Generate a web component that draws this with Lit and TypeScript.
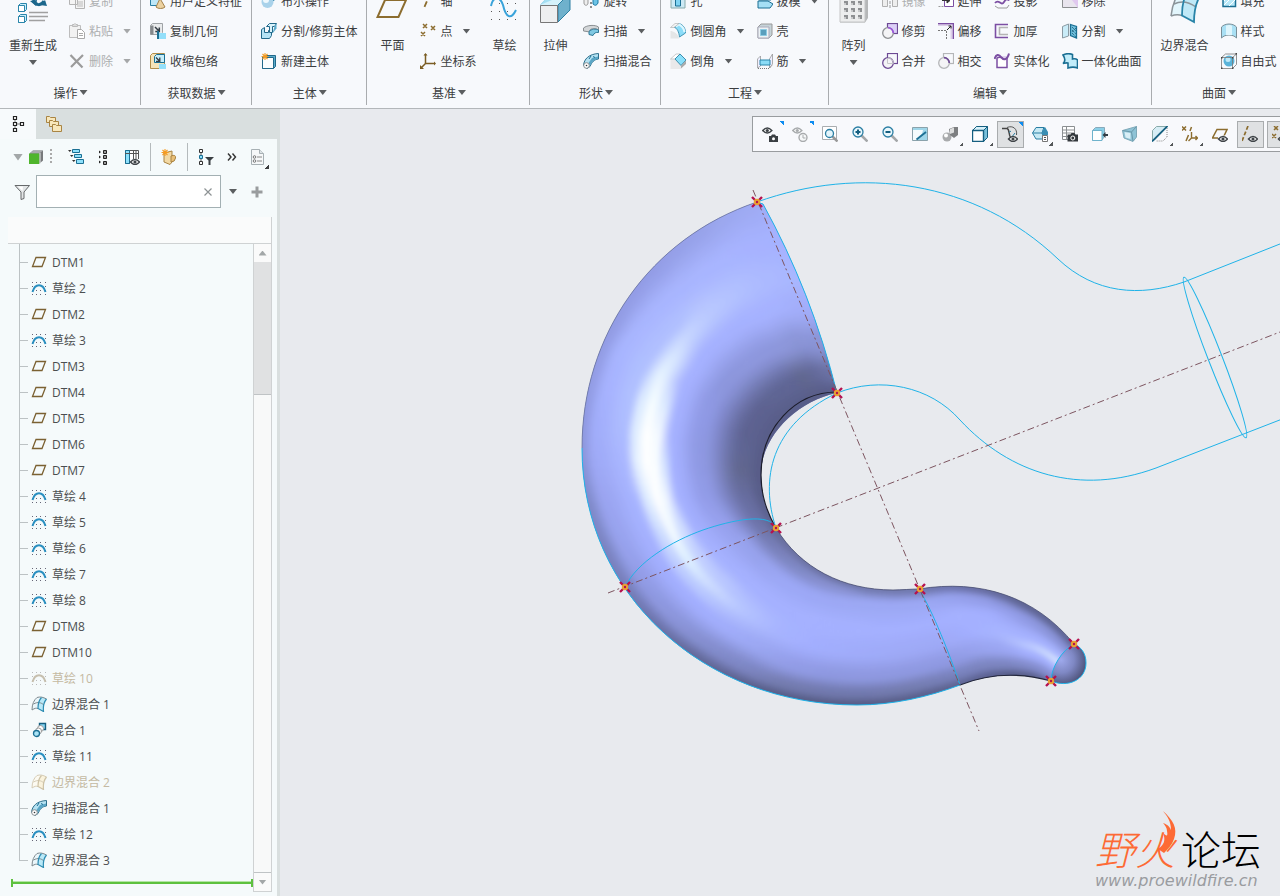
import {LitElement, html, svg, css, nothing, SVGTemplateResult} from 'lit';
import {customElement, property} from 'lit/decorators.js';
import {classMap} from 'lit/directives/class-map.js';

type Point = [number, number];

interface Command {
  icon: string;
  label: string;
  menu?: boolean;
  off?: boolean;
}

interface Big {
  big: Command;
}

interface Group {
  name: string;
  blocks: (Big | Command[])[];
}

/* ---------- icons ---------- */

const eye = (x: number, y: number, c = '#3f4448') => svg`
  <path d="M${x} ${y + 3}q4.500 -5 9 0q-4.500 5 -9 0z" fill="#fff" stroke=${c} stroke-width="1.500"/>
  <circle cx=${x + 4.5} cy=${y + 3} r="1.600" fill=${c}/>`;

const dots = (xs: number[], ys: number[], c: string) =>
  xs.map((x) => ys.map((y) => svg`<rect x=${x} y=${y} width="1" height="1" fill=${c}/>`));

const quilt = (edge: string, edge2: string, fill: string, fill2: string) => svg`
  <path d="M1 14C1 8 3 4 6 1.500C9 .5 12 1 15.500 3C13 6 12 11 12.500 15.500C9 12 5 12 1 14z" fill=${fill}/>
  <path d="M10.500 1.500C13 1.500 14 2 15.500 3C13 6 12 11 12.500 15.500L7 12.500C7 8 8 4 10.500 1.500z" fill=${fill2}/>
  <path d="M1 14C1 8 3 4 6 1.500C9 .5 12 1 15.500 3M1 14C4 12 5 12 7 12.500M2.500 8C7 5.500 10 6.500 13 9" fill="none" stroke=${edge}/>
  <path d="M15.500 3C13 6 12 11 12.500 15.500L7 12.500C7 8 8 4 10.500 1.500" fill="none" stroke=${edge2} stroke-width="1.200"/>`;

const sketch = (line: string, grid: string) => svg`
  ${dots([1, 5, 9, 14], [2, 14], grid)}${dots([1, 14], [6, 10], grid)}${dots([5, 9], [10], grid)}
  <path d="M1.500 12C4 3 12 3 14.500 12" fill="none" stroke=${line} stroke-width="2"/>`;

const sweep = svg`
  <path d="M.5 12.500C1 6 6 1 15.500 .5V6C11 6.500 9 9 7 13.500L4 15.500z" fill="#b5e2f2" stroke="#2c6f8c"/>
  <path d="M9 5L15 3.500V6C11 6.500 9 9 7 13L5.500 10z" fill="#5aa6c6"/>
  <path d="M6 6l2-3M10 3.500l2 1" stroke="#1b6f93"/>
  <circle cx="3.500" cy="12.500" r="2.800" fill="#fff" stroke="#8a8f92"/><circle cx="3.500" cy="12.500" r=".8" fill="#333"/>`;

const venn = (ring: string, box: string, extra: unknown = nothing, fill = 'none') => svg`
  <rect x="5.500" y=".5" width="10" height="10" fill=${fill} stroke=${box} stroke-width="1.200"/>
  <circle cx="6" cy="10" r="5.300" fill="#f4f4f6" stroke=${ring} stroke-width="1.300"/>${extra}`;

const icons: Record<string, SVGTemplateResult> = {
  regen: svg`
    <path d="M16 8c3 6 8 6 11 1" fill="none" stroke="#1c678c" stroke-width="3"/>
    <path d="M13 9l6 5 1-6zM23 13l7 1-2-6z" fill="#1c678c"/>
    <g fill="#c9eefb" stroke="#2a86ab"><path d="M1.500 13.500l2-2h6v6l-2 2h-6z"/><path d="M1.500 24.500l2-2h6v6l-2 2h-6z"/></g>
    <g fill="#fff" stroke="#2a86ab"><path d="M1.500 13.500h6v6h-6z"/><path d="M1.500 24.500h6v6h-6z"/></g>
    <path d="M12 20.500h19M12 24.500h19M12 28.500h16" stroke="#a0a0a0" stroke-width="1.500"/>`,
  copy: svg`
    <path d="M.5 1.500h8v10h-8zM6.500 5.500h9v10h-9z" fill="#f4f4f4" stroke="#b4b4b4"/>
    <path d="M8 9h6M8 11h6M8 13h6" stroke="#bbb"/>`,
  paste: svg`
    <path d="M.5 2.500h11v12h-11z" fill="#f2f2f2" stroke="#bdbdbd"/>
    <path d="M3.500 3.500v-2h1.500l1-1 1 1h1.500v2z" fill="#ddd" stroke="#bbb"/>
    <path d="M8.500 6.500h4l3 3v6h-7z" fill="#fff" stroke="#a9a9a9"/><path d="M10 10.500h4M10 12.500h4" stroke="#aaa"/>`,
  remove: svg`<path d="M1.500 2L13.500 14.500M14 2L2 14" stroke="#9b9b9b" stroke-width="2.200"/>`,
  udf: svg`
    <path d="M.5 1.500h9v11h-9z" fill="#bde7f7" stroke="#2a7ea3"/>
    <path d="M10 5.500l5 8.500c-2 2-7 2-9 0z" fill="#ecd2a1" stroke="#a3814a"/>`,
  copyGeom: svg`
    <path d="M.5 2.500l2-2h10v9l-2 2h-10z" fill="#e9ebec" stroke="#9fa3a6"/>
    <path d="M.5 2.500h3v9h-3z" fill="#85898c"/>
    <path d="M5 4l4 4M9.300 4.500v4h-4" fill="none" stroke="#333c44" stroke-width="1.500"/>
    <path d="M8 10h8v6H8z" fill="#93dffa"/><path d="M8 8v8" stroke="#1b6f93" stroke-width="2"/>`,
  shrink: svg`
    <path d="M.5 2.500l2-2h12v13l-2 2H.5z" fill="#f5e3b8" stroke="#b08d4a"/>
    <path d="M4.500 3.500l2-2h8v8h-10z" fill="#c6eefb" stroke="#1b6f93"/>
    <path d="M6 4.500l3.500 3.500M9.800 4.500v3.800H6" fill="none" stroke="#333c44" stroke-width="1.300"/>
    <path d="M9 11h7v5H9z" fill="#93dffa"/>`,
  bool: svg`
    <path d="M5 1.500l2-2h8v6l-2 2H5z" fill="#bde7f7" stroke="#2a7ea3"/>
    <circle cx="6.500" cy="9" r="6" fill="#a9d2ea"/><circle cx="5" cy="7" r="3" fill="#eef8fd"/>`,
  split: svg`
    <path d="M.5 6.500l3-2v5h4v-2h3v5l-2 3h-8z" fill="#b5e4f6" stroke="#22698a"/>
    <path d="M5.500 3.500l3-3h7l-2 3h-2v6h-3v-6z" fill="#d9f3fc" stroke="#22698a"/><path d="M13.500 3.500l2-3v5l-4 5z" fill="#5baccc"/>`,
  newBody: svg`
    <path d="M1.500 4.500l2-2h11v11l-2 2h-11z" fill="#5baccc" stroke="#22698a"/>
    <path d="M1.500 4.500h11v11h-11z" fill="#fbfdfe" stroke="#22698a"/>
    <path d="M4 0v7M.5 3.500h7M1.500 1l5 5M6.500 1l-5 5" stroke="#f49b22" stroke-width="1.100"/>`,
  plane: svg`<path d="M9 8h21L22.500 25H1.500z" fill="none" stroke="#8c6d2f" stroke-width="2"/>`,
  axis: svg`<path d="M10 1L4 15" stroke="#8c6d2f" stroke-width="1.800" stroke-dasharray="6 2"/>`,
  points: svg`<path d="M3 1l4 4M7 1l-4 4M11 3l4 4M15 3l-4 4M1 9l4 4M5 9l-4 4" stroke="#8c6d2f" stroke-width="1.500"/>`,
  csys: svg`
    <path d="M5.500 1v9.500h9M5.500 10.500L1 15" fill="none" stroke="#7a5c22" stroke-width="1.500"/>
    <path d="M3.500 2.500h4l-2-2.500zM14 8.500v4l2-2zM0 12v4h4z" fill="#7a5c22"/>`,
  sketchBig: svg`
    ${dots([3, 11, 19, 27], [11, 19, 27], '#555')}
    <path d="M3 14C5 4 12 4 15 13C18 26 23 28 28 18" fill="none" stroke="#39a3da" stroke-width="2"/>`,
  extrude: svg`
    <path d="M1 13L13 0h18v17L19 30z" fill="#7fbdd6"/>
    <path d="M1 13L13 0h18L19 13z" fill="#a4dff2"/><path d="M13 8h15l-9 5H1z" fill="#d5f2fb"/>
    <path d="M19 13L31 1v17L19 30z" fill="#6fb1cc" stroke="#2c7fa2"/>
    <path d="M1.500 13.500h17v17h-17z" fill="#eeeff0" stroke="#777"/>`,
  revolve: svg`
    <path d="M1 6c0-3 4-3 4 0v4c0 3-4 3-4 0z" fill="#eee" stroke="#999"/>
    <path d="M10 5h5v5q-2 4-5 1z" fill="#6cc3e6" stroke="#1f7ba4"/><path d="M8 1v15" stroke="#222" stroke-dasharray="2 2"/>`,
  sweepFlat: svg`
    <path d="M.5 5C4 2 12 1.500 15.500 4V7C12 5 9 5 7 7v2L.5 8z" fill="#d3d6d8" stroke="#8a8f92"/>
    <path d="M6 8.500C8 6 13 5.500 15.500 7v2.500C13 9 11 10 10 12.500l-4-1z" fill="#7fc8e2" stroke="#2e7896"/>`,
  sweep,
  hole: svg`
    <path d="M1 3h9l5 3v9H1z" fill="#cdeaf5" stroke="#8aa"/><path d="M5.500 3v10h5V3" fill="#7fd4f3" stroke="#1b6f93"/>`,
  round: svg`
    <path d="M.5 8C3 8 8 10 9 15.500H.5z" fill="#e4e6e7"/>
    <path d="M4 4L9 .5C14 2 15.500 6 15.500 10L9.500 14C9 9 7 5 4 4z" fill="#8bdcf8" stroke="#4295b5"/>
    <path d="M6 3.500L9 1.500C12 3 14 6 14.500 9" fill="none" stroke="#def7ff" stroke-width="2"/>
    <path d="M.5 4.500L5 .5h4L4 4.500z" fill="#f4f5f5" stroke="#aaa" stroke-width=".6"/>`,
  chamfer: svg`
    <path d="M.5 6.500H5l6 6V16H.5z" fill="#e9e9ea"/><path d="M.5 6L6 1h4L5 6z" fill="#fff" stroke="#aaa" stroke-width=".6"/>
    <path d="M5 6l5-5 6 6-5 5.500z" fill="#8ae0fb" stroke="#3c8eae"/><path d="M11 12.500l5-5V11l-5 4.500z" fill="#aaa"/>`,
  draft: svg`
    <path d="M2 0h8l4 7H2z" fill="#7fd4f3" stroke="#1b6f93"/><path d="M1 8h10l5 3-3 4H1z" fill="#a5dff5" stroke="#1b6f93"/>`,
  shell: svg`
    <path d="M1 4l3-3h11v11l-3 3H1z" fill="#c6d3d8" stroke="#999"/><path d="M1 4h11v11H1z" fill="#edf2f4" stroke="#aab"/>
    <path d="M3.500 6.500h6v6h-6z" fill="#5a9fbd" stroke="#8ccbe3"/>`,
  rib: svg`
    <path d="M.5 6l3-3v10l-3 2zM12.500 6l3-5v10l-3 4z" fill="#eef" stroke="#999" stroke-width=".8"/>
    <path d="M3 7h10v5H3z" fill="#8adcf6" stroke="#2a86ab"/><path d="M1 15.500h11l3-3" fill="none" stroke="#777" stroke-dasharray="1 1"/>`,
  pattern: svg`
    <path d="M2 8l3-8h25v26l-3 4.500H2z" fill="#b5b7b8"/><path d="M2 4h25v26H2z" fill="#eceded" stroke="#c4c5c6"/>
    ${[6, 13, 20].map((x) => [9, 16, 23].map((y) => svg`<path d="M${x} ${y}h4v4h-4z" fill="#8e9092"/><path d="M${x} ${y + 2}h2v2h-2z" fill="#c9cacb"/>`))}`,
  mirror: svg`<path d="M.5 1.500h5v12h-5zM10.500 1.500h5v12h-5z" fill="#eee" stroke="#b0b0b0"/><path d="M8 0v16" stroke="#999" stroke-dasharray="3 1"/>`,
  extend: svg`<path d="M.5 2h6M.5 13.500h6" stroke="#999" stroke-dasharray="2 1"/><path d="M6.500 1.500h9v12h-9z" fill="#fff" stroke="#7c4fa3"/><path d="M4 7.500h6M9 5l3 2.500L9 10z" stroke="#333" fill="#333"/>`,
  project: svg`<path d="M1 10C5 5 7 14 10 9S14 8 15 7" fill="none" stroke="#7c4fa3" stroke-width="1.800"/><path d="M1 13l3 2h9l2-3" fill="none" stroke="#999"/>`,
  erase: svg`<path d="M.5 1h15v13.500H.5z" fill="#e9e5ee" stroke="#8d8f91"/><path d="M10 7h6v8" fill="#e0c8ef"/>`,
  trim: venn('#8e9093', '#6d4a94', svg`<path d="M6 4.700A5.300 5.300 0 0 1 11.300 10" fill="none" stroke="#9a4fe0" stroke-width="1.600"/>`, '#dcd0f7'),
  merge: venn('#6d4a94', '#6d4a94', svg`<path d="M6 4.700A5.300 5.300 0 0 1 11.300 10.500H5.500V5" fill="none" stroke="#c6c7c9"/>`),
  intersect: venn('#b4b6b8', '#b4b6b8', svg`<path d="M6 4.700A5.300 5.300 0 0 1 11.300 10" fill="none" stroke="#6d4a94" stroke-width="1.700"/>`),
  offset: svg`
    <path d="M0 1.500h14V16" fill="none" stroke="#dccfe8" stroke-width="3"/><path d="M0 .5h15.500V16" fill="none" stroke="#7c4fa3" stroke-width="1.500"/>
    <path d="M0 7.500h8.500V16" fill="none" stroke="#777" stroke-dasharray="2 1"/><path d="M9 7l4-4M10.500 3H13v2.500" fill="none" stroke="#222"/>`,
  thicken: svg`
    <path d="M14 1.500H1.500v13H14" fill="none" stroke="#7c4fa3" stroke-width="1.600"/><path d="M14 4.500H5.500v7H14" fill="none" stroke="#b4b4b4" stroke-width="1.600"/>`,
  solidify: svg`
    <path d="M3 5v9.500h10V5C9 7 7 2 3 5z" fill="#fff" stroke="#7c4fa3" stroke-width="1.500"/>
    <path d="M7 3l5 4 1-4z" fill="#e0d4ee"/><path d="M.5 6C2 1 5 1 7 4S13 8 15 .5" fill="none" stroke="#7c4fa3" stroke-width="2"/>`,
  divide: svg`
    <path d="M.5 3.500l6-2.500v12l-6 2z" fill="#c9ecf8" stroke="#8a9aa2"/>
    <path d="M8.500 1.500l6 2v11.500l-6-2.500z" fill="#6fc0dd" stroke="#1b6f93" stroke-width="1.300"/>
    <path d="M10 4l4 4M10 7l4 4M10 10l4 4M14 5l-4 4" stroke="#14506b" stroke-dasharray="1 1"/>`,
  unify: svg`<path d="M1 2C4 .5 8 .5 10.500 1.500V6c2-.5 4 0 5 1V15C13 14 9 14 6 15V10C4 9.500 3 10 1 10.500C4 8 3 5 1 2z" fill="#c2edfa" stroke="#1b6f93" stroke-width="1.600"/>`,
  boundary: svg`
    <path d="M2 24C3 14 6 6 11 0h16c3 1 4 1 5 2C27 9 25 18 25 30C17 23 9 22 2 24z" fill="#e3f6fc"/>
    <path d="M18 0h14C27 9 25 18 25 30L13 23.500C13 14 14 6 18 0z" fill="#bfe9f7"/>
    <path d="M2 24C3 14 6 6 11 0M2 24c4-1.500 8-1.500 11-.5M5 12c8-4 15-2 22 3" fill="none" stroke="#8b9499" stroke-width="1.500"/>
    <path d="M33 1C27 9 25 18 25 30L13 23.500C13 14 15 5 19 0" fill="none" stroke="#2884a8" stroke-width="1.800"/>`,
  fill: svg`<path d="M2 0h12.500v13.500H2z" fill="#b8e8f8" stroke="#1b6f93" stroke-width="1.500"/><path d="M3 8l6-6M3 12l10-10M8 13l6-6" stroke="#fff"/>`,
  style: svg`<path d="M.5 4C4 0 12 0 15.500 4V15C12 11 4 11 .5 15z" fill="#a9e0f4" stroke="#7a8f98"/><path d="M5 2.500C8 1.500 10 2 11 3v9H5z" fill="#def5fc"/>`,
  freeform: svg`
    <circle cx="8" cy="8" r="5.500" fill="#59b3d9"/><circle cx="7" cy="6.500" r="2.500" fill="#bfe9f8"/>
    <path d="M.5 4.500l4-3.500h11v10.500l-4 4H.5zM.5 4.500h11v11M11.500 4.500L15.500 1" fill="none" stroke="#777" stroke-width=".8"/>
    <path d="M0 4h1.500v1.500H0zM11 4h1.500v1.500H11zM0 14.500h1.500V16H0zM11 14.500h1.500V16H11zM14.500 0H16v1.500h-1.500z" fill="#444"/>`,

  treeTab: svg`
    <path d="M5 4v9M7 8h4" stroke="#777" stroke-width="1"/>
    <path d="M3.500.5h3v3h-3zM3.500 6.500h3v3h-3zM3.500 12.500h3v3h-3zM10.500 6.500h3v3h-3z" fill="#fff" stroke="#222" stroke-width="1.200"/>`,
  folders: svg`
    <g fill="#f8e7bb" stroke="#a98443"><path d="M.5 .5h3l1 1h5v5h-9z"/><path d="M3.500 4.500h3l1 1h5v5h-9z"/><path d="M6.500 8.500h3l1 1h5v6h-9z"/></g>`,
  model: svg`
    <path d="M1.500 4.500L5 1.500h10v10l-3.500 3z" fill="#77797b"/><path d="M1.500 4.500L5 1.500h10l-3.500 3z" fill="#a9abad"/>
    <path d="M1 4.500h10.500V15H1z" fill="#4fb52c"/><path d="M12 4v11" stroke="#e6eaea"/>`,
  levels: svg`
    <path d="M0 1l3.500 0-1.700 2zM2 6h3.500L3.700 8zM4 11h3.500l-1.700 2z" fill="#333"/>
    <g fill="#8ee0fb" stroke="#1b6f93"><path d="M4.500.5h7v3h-7zM6.500 5.500h7v3h-7zM8.500 10.500h7v4h-7z"/></g>`,
  expand: svg`
    <path d="M3 1.500l2 1.500-2 1.500zM3 6.500l2 1.500-2 1.500zM3 11.500l2 1.500-2 1.500z" fill="#222"/>
    <g fill="#999" stroke="#222"><path d="M7.500 1.500h3v3h-3zM7.500 6.500h3v3h-3zM7.500 12.500h3v3h-3z"/></g>`,
  columns: svg`
    <path d="M1.500 1.500h13v13h-13z" fill="#fff" stroke="#555"/><path d="M1.500 1.500h4v13h-4z" fill="#8ee0fb" stroke="#1b6f93"/>
    <path d="M1 4.500h14M9.500 1v12M12 1v12" stroke="#555"/><path d="M6 10h10v6H6z" fill="#f5fafb"/>${eye(6.5, 10)}`,
  bodyNew: svg`
    <path d="M3 4l8-2v11l-2 2.500L3 13z" fill="#f3d9a4" stroke="#a98443"/><path d="M10 7q5-2 4.500 2T10 13z" fill="#e9bf77" stroke="#a98443"/>
    <path d="M4 0v7M.5 3.500h7M1.500 1l5 5M6.500 1l-5 5" stroke="#f49b22" stroke-width="1.100"/>`,
  treeFilter: svg`
    <path d="M3 4v9" stroke="#555"/><path d="M1.500.5h3v3h-3zM1.500 12.500h3v3h-3z" fill="#fff" stroke="#333"/>
    <path d="M1.500 6.500h3v3h-3z" fill="#8ee0fb" stroke="#1b6f93"/><path d="M7 8h9l-3.500 3.500V16h-2v-4.500z" fill="#3a3f43"/>`,
  more: svg`<path d="M4 4.500l3 3.500-3 3.500M8.500 4.500l3 3.500-3 3.500" fill="none" stroke="#333" stroke-width="1.400"/>`,
  sheet: svg`
    <path d="M1.500.5h8l4 4v11h-12z" fill="#f6f8f9" stroke="#a7b0b4"/><path d="M9.500.5v4h4" fill="#dde3e6" stroke="#a7b0b4"/>
    <circle cx="4.500" cy="8" r="1.300" fill="none" stroke="#777"/><circle cx="4.500" cy="12" r="1.300" fill="none" stroke="#777"/><path d="M7 8h5M7 12h5" stroke="#888"/>`,
  funnel: svg`<path d="M1 1.500h14.500L10 8v6.500l-3 1V8z" fill="#e3e6e7" stroke="#66696b"/><path d="M4 2.500h5L8.500 7z" fill="#fff"/>`,
  clear: svg`<path d="M4.500 4.500l7 7M11.500 4.500l-7 7" stroke="#8d9294" stroke-width="1.200"/>`,
  plus: svg`<path d="M8 2.500v11M2.500 8h11" stroke="#999c9e" stroke-width="3"/>`,

  datum: svg`<path d="M5 3.500h9.500l-3.500 9H1.500z" fill="none" stroke="#7b6132" stroke-width="1.300"/>`,
  sketch: sketch('#2a8fc0', '#667'),
  sketchOff: sketch('#c6bfae', '#bbb'),
  quilt: quilt('#7f8a8f', '#2d8cb2', '#eaf6fa', '#b9e9f8'),
  quiltOff: quilt('#d5ccb6', '#cdc2a6', '#fcfaf1', '#faf3dd'),
  blend: svg`
    <path d="M8.500 1.500h6v6h-6z" fill="#86d6f3" stroke="#155f80" stroke-width="1.400"/>
    <circle cx="9.500" cy="6.500" r="3" fill="#fff" stroke="#999"/><circle cx="7.500" cy="9" r="3" fill="#fff" stroke="#999"/>
    <circle cx="5.500" cy="11.500" r="3" fill="#a9e3f6" stroke="#1b6f93" stroke-width="1.300"/>`,

  saved: svg`${eye(0.8, 1.5)}<path d="M7 10h2l1-1.500h3l1 1.500h2v6H7z" fill="#3a3f43"/><circle cx="11.500" cy="12.800" r="1.500" fill="#fff"/>`,
  recent: svg`${eye(0.8, 1.5, '#a8abad')}<circle cx="11" cy="11.500" r="4" fill="#f6f8f9" stroke="#a8abad" stroke-width="1.400"/><path d="M11 9v3h2.500" fill="none" stroke="#a8abad"/>`,
  zoomFit: svg`
    <path d="M.5.5h14v13H.5z" fill="#fff" stroke="#a9adb0"/><path d="M10.500 10.500l5 5" stroke="#999" stroke-width="2.500"/>
    <circle cx="7.500" cy="7.500" r="4" fill="#e4f5fb" stroke="#2a7ea3" stroke-width="1.300"/>`,
  zoomIn: svg`
    <path d="M9.500 9.500l6 6" stroke="#a3a6a8" stroke-width="2.500"/><circle cx="6" cy="6" r="5" fill="#e9f7fc" stroke="#2a7ea3" stroke-width="1.300"/>
    <path d="M3.500 6h5M6 3.500v5" stroke="#155f80" stroke-width="2"/>`,
  zoomOut: svg`
    <path d="M9.500 9.500l6 6" stroke="#a3a6a8" stroke-width="2.500"/><circle cx="6" cy="6" r="5" fill="#e9f7fc" stroke="#2a7ea3" stroke-width="1.300"/>
    <path d="M3.500 6h5" stroke="#155f80" stroke-width="2"/>`,
  repaint: svg`
    <path d="M.5 1.500h15v13H.5z" fill="#9fd6e9" stroke="#8aa2ab"/><path d="M1 4h10Q10 11 4 14H1z" fill="#f4fbfd"/>
    <path d="M4.500 13.500L14 6" stroke="#1b6f93" stroke-width="1.800"/>`,
  shade: svg`
    <circle cx="5" cy="11" r="4.500" fill="#a9abad"/><circle cx="4" cy="9.500" r="2" fill="#fff"/>
    <path d="M7 3l5-2h4v8l-4 3-4-3z" fill="#7d7f81"/><path d="M8 3l4-1.500v5L8 8z" fill="#dcdddd"/>`,
  display: svg`
    <path d="M.5 4.500l4-4h11v11l-4 4z" fill="#79c0da" stroke="#155f80"/><path d="M.5 4.500l4-4h11l-4 4z" fill="#d7f1fa" stroke="#155f80"/>
    <path d="M.5 4.500h11v11H.5z" fill="#fff" stroke="#155f80" stroke-width="1.400"/>`,
  spline: svg`
    <path d="M0 2.500h5C8 3 6 9 9 12l4 2" fill="none" stroke="#444" stroke-width="1.500"/>
    <path d="M5 1.500C11-1 15.500 3 14.500 9" fill="none" stroke="#555"/><path d="M7 6.500l2-1.500M9 12l4-5" stroke="#2a7ea3"/>${eye(6.5, 10)}`,
  orient: svg`
    <path d="M.5 7L4 1.500h8L15 7l-3 6H4z" fill="#c6e9f4" stroke="#2a7ea3"/><path d="M.5 7H10M12 1l-2 6 2 6" fill="none" stroke="#2a7ea3"/>
    <path d="M10 6l3-5 3 5v3h-6z" fill="#3a8fb4"/><path d="M10.500 9.500h5v6h-5z" fill="#fff" stroke="#777"/><path d="M12 11.500h2M12 13.500h2" stroke="#555"/>`,
  views: svg`
    <path d="M.5.5h12v13H.5z" fill="#fff" stroke="#8b8f91"/><path d="M0 4h13M0 7h13M0 10.500h13M4.500 0v14" stroke="#8b8f91"/>
    <path d="M5.500 8.500h3l1-1.500h3l1 1.500h2.500v7H5.500z" fill="#34393d"/><circle cx="10.800" cy="12" r="2" fill="#34393d" stroke="#fff"/>`,
  exploded: svg`
    <path d="M.5 4.500l3-3h9v9l-3 4h-9z" fill="#8bd0e8" stroke="#8ab"/><path d="M.5 4.500h9.500v10H.5z" fill="#fff" stroke="#6fb3cc"/>
    <path d="M16 9h-4" stroke="#333c44" stroke-width="2"/><path d="M13.500 6v6L10.500 9z" fill="#333c44"/>`,
  persp: svg`
    <path d="M.5 4.500L14.500.5V11L11 15.500 2 12z" fill="#8ec3d6" stroke="#7fa9b8"/><path d="M.5 4.500l9 1.500 5-5.500M9.500 6L11 15" fill="none" stroke="#6a98aa"/>
    <path d="M2.500 6l6 1v6l-5-1.500z" fill="#d9eff6"/>`,
  section: svg`
    <path d="M.5 4.500l4-4h11L2 14.500H.5z" fill="#d6edf5" stroke="#8aa"/><path d="M15 2v9l-4 4H4" fill="none" stroke="#888" stroke-dasharray="1 1"/>
    <path d="M0 15.500L15.500 0" stroke="#155f80" stroke-width="1.700"/>`,
  datums: svg`
    <path d="M0 .5l4 4M4 .5l-4 4M9.500 1l-1.500 4M6.500 9L4 15" stroke="#8c6d2f" stroke-width="1.500"/>
    <path d="M9.500 6v6h6M9.500 12l-3 3M13.500 10l2 2-2 2" fill="none" stroke="#8c6d2f" stroke-width="1.400"/>`,
  planeShow: svg`<path d="M5 3.500h10l-4 8.500H.5z" fill="none" stroke="#8c6d2f" stroke-width="1.500"/><path d="M6 9.500h10v6H6z" fill="#f8f9fc"/>${eye(6.5, 10)}`,
  axisShow: svg`<path d="M6 0L0 15" stroke="#8c6d2f" stroke-width="1.700" stroke-dasharray="4 2"/>${eye(6.5, 10)}`,
  pointShow: svg`<path d="M2 0l4 4M6 0l-4 4M0 8l4 4M4 8l-4 4M10 4l4 4M14 4l-4 4" stroke="#8c6d2f" stroke-width="1.500"/>${eye(6.5, 10)}`,
};

const icon = (name: string, size = 16) => html`
  <svg class="icon" width=${size} height=${size} viewBox="0 0 ${size} ${size}" aria-hidden="true">${icons[name]}</svg>
`;

/* ---------- ribbon, tree and toolbar contents ---------- */

const groups: Group[] = [
  {name: '操作', blocks: [
    {big: {icon: 'regen', label: '重新生成', menu: true}},
    [
      {icon: 'copy', label: '复制', off: true},
      {icon: 'paste', label: '粘贴', off: true, menu: true},
      {icon: 'remove', label: '删除', off: true, menu: true},
    ],
  ]},
  {name: '获取数据', blocks: [[
    {icon: 'udf', label: '用户定义特征'},
    {icon: 'copyGeom', label: '复制几何'},
    {icon: 'shrink', label: '收缩包络'},
  ]]},
  {name: '主体', blocks: [[
    {icon: 'bool', label: '布尔操作'},
    {icon: 'split', label: '分割/修剪主体'},
    {icon: 'newBody', label: '新建主体'},
  ]]},
  {name: '基准', blocks: [
    {big: {icon: 'plane', label: '平面'}},
    [
      {icon: 'axis', label: '轴'},
      {icon: 'points', label: '点', menu: true},
      {icon: 'csys', label: '坐标系'},
    ],
    {big: {icon: 'sketchBig', label: '草绘'}},
  ]},
  {name: '形状', blocks: [
    {big: {icon: 'extrude', label: '拉伸'}},
    [
      {icon: 'revolve', label: '旋转'},
      {icon: 'sweepFlat', label: '扫描', menu: true},
      {icon: 'sweep', label: '扫描混合'},
    ],
  ]},
  {name: '工程', blocks: [
    [
      {icon: 'hole', label: '孔'},
      {icon: 'round', label: '倒圆角', menu: true},
      {icon: 'chamfer', label: '倒角', menu: true},
    ],
    [
      {icon: 'draft', label: '拔模', menu: true},
      {icon: 'shell', label: '壳'},
      {icon: 'rib', label: '筋', menu: true},
    ],
  ]},
  {name: '编辑', blocks: [
    {big: {icon: 'pattern', label: '阵列', menu: true}},
    [
      {icon: 'mirror', label: '镜像', off: true},
      {icon: 'trim', label: '修剪'},
      {icon: 'merge', label: '合并'},
    ],
    [
      {icon: 'extend', label: '延伸'},
      {icon: 'offset', label: '偏移'},
      {icon: 'intersect', label: '相交'},
    ],
    [
      {icon: 'project', label: '投影'},
      {icon: 'thicken', label: '加厚'},
      {icon: 'solidify', label: '实体化'},
    ],
    [
      {icon: 'erase', label: '移除'},
      {icon: 'divide', label: '分割', menu: true},
      {icon: 'unify', label: '一体化曲面'},
    ],
  ]},
  {name: '曲面', blocks: [
    {big: {icon: 'boundary', label: '边界混合'}},
    [
      {icon: 'fill', label: '填充'},
      {icon: 'style', label: '样式'},
      {icon: 'freeform', label: '自由式'},
    ],
  ]},
];

const features: [string, string][] = [
  ['datum', 'DTM1'],
  ['sketch', '草绘 2'],
  ['datum', 'DTM2'],
  ['sketch', '草绘 3'],
  ['datum', 'DTM3'],
  ['datum', 'DTM4'],
  ['datum', 'DTM5'],
  ['datum', 'DTM6'],
  ['datum', 'DTM7'],
  ['sketch', '草绘 4'],
  ['sketch', '草绘 5'],
  ['sketch', '草绘 6'],
  ['sketch', '草绘 7'],
  ['sketch', '草绘 8'],
  ['datum', 'DTM8'],
  ['datum', 'DTM10'],
  ['sketchOff', '草绘 10'],
  ['quilt', '边界混合 1'],
  ['blend', '混合 1'],
  ['sketch', '草绘 11'],
  ['quiltOff', '边界混合 2'],
  ['sweep', '扫描混合 1'],
  ['sketch', '草绘 12'],
  ['quilt', '边界混合 3'],
];

const viewTools: [string, string, string?][] = [
  ['saved', '已保存方向', 'hot'],
  ['recent', '上一视图', 'hot'],
  ['zoomFit', '重新调整'],
  ['zoomIn', '放大'],
  ['zoomOut', '缩小'],
  ['repaint', '重画'],
  ['shade', '渲染选项', 'drop'],
  ['display', '显示样式', 'drop'],
  ['spline', '曲线显示', 'on hot'],
  ['orient', '视图方向', 'drop'],
  ['views', '视图管理器'],
  ['exploded', '分解视图'],
  ['persp', '透视图'],
  ['section', '截面', 'drop'],
  ['datums', '基准显示过滤器', 'drop'],
  ['planeShow', '平面显示'],
  ['axisShow', '轴显示', 'on'],
  ['pointShow', '点显示', 'on'],
];

/* ---------- model geometry ---------- */

// outer point, inner point, colour stops running from outer to inner
const stations: [Point, Point, string][] = [
  [[767, 195], [851, 386], '0:a0acf5 .2:a6b2ff .45:a9b7ff .6:a2aefc .75:8d97da .9:6d74a8 1:585d88'],
  [[757, 202], [837, 393], '0:a0acf5 .2:a6b2ff .4:a9b7ff .55:a3aefa .75:8a94d6 .9:6b72a5 1:585d88'],
  [[728, 211], [826, 396], '0:9ca8f0 .2:a7b3ff .38:acbaff .52:a6b2ff .72:8a94d6 .88:646a9a 1:585d88'],
  [[702, 226], [817, 400], '0:98a3ea .2:a8b5ff .36:b0bfff .52:a6b2ff .7:8d97db .88:61678f 1:585d88'],
  [[678, 243], [808, 404], '0:95a0e8 .2:a9b6ff .36:b5c4ff .5:a6b2ff .68:8e98de .88:5f6594 1:585d88'],
  [[653, 267], [800, 408], '0:939de6 .18:a9b6ff .36:bbcaff .49:a6b2ff .67:8e98de .88:5f6594 1:585d88'],
  [[632, 294], [790, 415], '0:939de6 .15:a9b6ff .27:b0bfff .35:c6d5ff .48:a5b1ff .66:8d97dd .88:5f6593 1:585d88'],
  [[615, 322], [783, 423], '0:929ce4 .12:a9b6ff .25:b0bfff .35:d8e7ff .48:a5b1ff .65:8c96dd .88:5d6290 1:585d88'],
  [[602, 347], [776, 432], '0:929ce4 .1:a8b5ff .24:b0c0ff .34:e6f3ff .48:a5b1ff .63:8f99e3 .88:5d6290 1:585d88'],
  [[590, 383], [770, 442], '0:929ce4 .1:a7b3ff .23:b0c0ff .3:e0eeff .35:f6fdff .41:e0edff .49:a5b1ff .63:909ae6 .88:5d6290 1:585d88'],
  [[583, 423], [764, 455], '0:8f99e0 .08:a2aefb .23:adbcff .3:e4f1ff .35:ffffff .41:f6fbff .5:a4b0ff .65:8f99e3 .89:5f6593 1:585d88'],
  [[582, 460], [761, 473], '0:8a94d9 .08:9faaf7 .24:a9b6ff .32:eaf5ff .36:ffffff .42:f9fdff .46:d5e3ff .52:a4b0ff .67:8f99e3 .9:61678f 1:585d88'],
  [[588, 503], [763, 494], '0:808ac9 .1:9aa4f0 .27:a6b3ff .35:e2efff .4:ffffff .44:f2f9ff .53:a4b0ff .68:929ce8 .9:676d9f 1:585d88'],
  [[603, 547], [770, 514], '0:7a83c0 .12:98a3ee .28:a5b1ff .36:cddcff .42:f2faff .48:d0deff .56:a4b0ff .72:97a1ee .92:6a70a5 1:5c628f'],
  [[625, 587], [776, 528], '0:767eb9 .12:929ce6 .28:a3afff .36:bfceff .43:def0ff .5:c3d0ff .6:a5b1ff .78:98a3ee .93:7178ae 1:626895'],
  [[655, 625], [787, 543], '0:6b72a8 .12:8c96dc .3:a3afff .38:b8c7ff .45:cbdaff .52:bac8ff .64:a5b1ff .8:98a3ee .93:7980ba 1:6a70a0'],
  [[687, 652], [810, 563], '0:646a9b .12:858fd0 .3:a2aefc .46:b5c4ff .64:a5b1ff .8:9ca8f6 .93:8089c6 1:6a70a0'],
  [[730, 678], [830, 575], '0:5d6390 .12:7e87c5 .3:9ba7f2 .47:a8b5ff .64:a5b1ff .82:9ca8f6 .93:8790d0 1:6a70a0'],
  [[773, 694], [850, 583], '0:555b84 .1:747caf .25:929ce6 .45:a3afff .65:a5b1ff .85:9ca8f4 .95:8790d0 1:6a70a0'],
  [[817, 703], [870, 587], '0:555b84 .1:7179ae .25:8f99e1 .45:a1adfc .65:a5b1ff .87:9ca8f4 1:7078ac'],
  [[860, 705], [893, 589], '0:555b84 .1:7179ae .25:8f99e1 .45:9fabf9 .65:a4b0ff .87:9ca8f4 1:7078ac'],
  [[905, 700], [906, 589], '0:595f8a .1:747caf .25:8f99e1 .45:9faaf7 .65:a4b0ff .87:9ca8f4 1:7078ac'],
  [[960, 685], [919, 589], '0:5d6390 .1:7881bb .25:909ae3 .45:9faaf7 .65:a4b0ff .87:9ca8f4 1:7078ac'],
  [[987, 677], [950, 586], '0:5a6090 .12:7c85c0 .3:98a3ee .5:a3afff .7:a5b1ff .88:97a2ee 1:6c73ac'],
  [[1010, 675], [985, 590], '0:555b84 .12:7c85c0 .3:9ba6f2 .5:a8b5ff .7:a3afff .88:929ce6 1:666ca0'],
  [[1030, 677], [1020, 601], '0:555b84 .15:838ccc .32:a4b0ff .42:b8c6ff .55:a5b1ff .8:919be5 1:5d6390'],
  [[1041, 679], [1050, 620], '0:5d6390 .15:858ecf .34:a5b1ff .45:cad8ff .58:a6b2ff .8:8b95da 1:5d6390'],
  [[1051, 681], [1074, 644], '0:6b72a8 .15:8a94d9 .32:a8b5ff .45:dbe8ff .6:aab7ff .8:8790d4 1:5d6390'],
];

// silhouette, one piece per edge of the model
const outerTop = 'M757 202C650 238 582 335 582 448';
const outerBottom = 'C582 595 705 705 857 705C893 705 928 697 960 685';
const belly = 'C990 673 1022 673 1051 681';
const tip = 'C1068 688 1086 680 1086 663C1086 653 1081 647 1074 644';
const back = 'C1035 596 980 579 919 589C911 589 902 590 893 590C843 590 800 568 776 528';
const throat = 'C766 511 761 495 761 475C761 436 797 401 837 393';
const rightEdge = 'M837 393C820 325 795 262 763 204L757 202';
const body = outerTop + outerBottom + belly + tip + back + throat + rightEdge.replace('M837 393', '') + 'Z';

const innerFold = 'M837 392C795 392 761 428 761 475C761 495 766 511 776 528';
const upperGuide = 'M757 202C860 165 975 180 1058 259C1095 294 1140 297 1184 282L1290 240';
const lowerGuide = 'M776 528C760 480 770 425 837 393C880 376 930 386 960 420C1010 474 1080 496 1156 468L1290 416';
const midSeam = 'M625 587C637 562 672 541 703 530C732 520 770 512 776 528';
const tailSeam = 'M919 589C933 612 950 655 960 685';
const tipSeam = 'M1074 644C1062 650 1051 668 1051 681';

const vertices: Point[] = [[757, 202], [837, 393], [776, 528], [625, 587], [920, 589], [1074, 644], [1051, 681]];

function parseStops(stops: string) {
  return stops.split(' ').map((s) => {
    const [t, hex] = s.split(':');
    const n = parseInt(hex, 16);
    return {t: Number(t), rgb: [n >> 16, (n >> 8) & 255, n & 255]};
  });
}

const mix = (a: number[], b: number[], k: number) => a.map((v, i) => v + (b[i] - v) * k);

function shadeAt(stops: ReturnType<typeof parseStops>, at: number): number[] {
  const t = Math.max(0, Math.min(1, at));
  const i = Math.max(1, stops.findIndex((s) => s.t >= t));
  const [a, b] = [stops[i - 1], stops[i]];
  const k = (t - a.t) / (b.t - a.t);
  return mix(a.rgb, b.rgb, k * k * (3 - 2 * k));
}

function spline(p: Point[], i: number, k: number): number[] {
  const [a, b, c, d] = [p[Math.max(0, i - 1)], p[i], p[i + 1], p[Math.min(p.length - 1, i + 2)]];
  return [0, 1].map(
    (n) =>
      b[n] +
      0.5 * k * (c[n] - a[n] + k * (2 * a[n] - 5 * b[n] + 4 * c[n] - d[n] + k * (3 * (b[n] - c[n]) + d[n] - a[n])))
  );
}

// shaded facets between neighbouring stations, running a little past both edges
function facets() {
  const steps = 5;
  const bands = 44;
  const outs = stations.map((s) => s[0]);
  const ins = stations.map((s) => s[1]);
  const profiles = stations.map((s) => parseStops(s[2]));
  const result = [];
  for (let i = 0; i < stations.length - 1; i++) {
    for (let s = 0; s < steps; s++) {
      const [k0, k1] = [s / steps, (s + 1) / steps];
      const [o0, o1] = [spline(outs, i, k0), spline(outs, i, k1)];
      const [i0, i1] = [spline(ins, i, k0), spline(ins, i, k1)];
      for (let b = -2; b < bands + 2; b++) {
        const [t0, t1] = [b / bands, (b + 1) / bands];
        const t = (t0 + t1) / 2;
        const rgb = mix(shadeAt(profiles[i], t), shadeAt(profiles[i + 1], t), (k0 + k1) / 2);
        const quad = [mix(o0, i0, t0), mix(o1, i1, t0), mix(o1, i1, t1), mix(o0, i0, t1)];
        const fill = `rgb(${rgb.map(Math.round).join(',')})`;
        const d = 'M' + quad.map((q) => q.map((v) => v.toFixed(1)).join(' ')).join('L') + 'Z';
        result.push(svg`<path d=${d} fill=${fill} stroke=${fill}/>`);
      }
    }
  }
  return result;
}

@customElement('ribbon-group')
class RibbonGroup extends LitElement {
  static override styles = css`
    :host {
      display: flex;
      flex: none;
      flex-direction: column;
      background: linear-gradient(#a9acaf, #a9acaf) top right / 1px calc(100% - 3px) no-repeat;
    }

    .blocks {
      display: flex;
      gap: 12px;
      height: 90px;
      padding: 0 10px 0 9px;
    }

    .column {
      display: flex;
      flex-direction: column;
      align-items: flex-start;
    }

    button {
      display: flex;
      align-items: center;
      padding: 0;
      border: 0;
      background: none;
      color: #3b3d3f;
      font: inherit;
      white-space: nowrap;
    }

    button:disabled {
      color: #adafb0;
    }

    span {
      padding-top: 2px;
    }

    .small {
      gap: 4px;
      height: 30px;
    }

    .big {
      flex-direction: column;
      height: 90px;
      padding-top: 6px;
    }

    .big span {
      margin-top: 11px;
      line-height: 18px;
    }

    .icon {
      display: block;
      flex: none;
    }

    .arrow {
      width: 8px;
      height: 5px;
      background: #5b5e60;
      clip-path: polygon(0 0, 100% 0, 50% 100%);
    }

    .small .arrow {
      margin-left: 6px;
    }

    .big .arrow {
      margin-top: 5px;
    }

    :disabled .arrow {
      background: #a5a7a8;
    }

    .name {
      gap: 2px;
      justify-content: center;
      height: 32px;
      padding-top: 1px;
    }
  `;

  @property({attribute: false})
  group!: Group;

  private _block(block: Big | Command[]) {
    if ('big' in block) {
      return html`
        <button class="big">
          ${icon(block.big.icon, 32)}
          <span>${block.big.label}</span>
          ${block.big.menu ? html`<i class="arrow"></i>` : nothing}
        </button>
      `;
    }
    return html`
      <div class="column">
        ${block.map(
          (c) => html`
            <button class="small" ?disabled=${!!c.off}>
              ${icon(c.icon)}
              <span>${c.label}</span>
              ${c.menu ? html`<i class="arrow"></i>` : nothing}
            </button>
          `
        )}
      </div>
    `;
  }

  override render() {
    return html`
      <div class="blocks">${this.group.blocks.map((b) => this._block(b))}</div>
      <button class="name"><span>${this.group.name}</span><i class="arrow"></i></button>
    `;
  }
}

@customElement('model-tree')
class ModelTree extends LitElement {
  static override styles = css`
    :host {
      display: flex;
      flex: none;
      flex-direction: column;
      box-sizing: border-box;
      width: 280px;
      background: #f5fafb;
    }

    button {
      display: flex;
      align-items: center;
      justify-content: center;
      padding: 0;
      border: 0;
      background: none;
    }

    .icon {
      display: block;
      flex: none;
    }

    .tabs {
      display: flex;
      background: #d9dfdf;
    }

    .tabs button {
      width: 36px;
      height: 30px;
    }

    .tabs .active {
      background: #f7fafc;
    }

    .content {
      display: flex;
      flex: 1;
      flex-direction: column;
      min-height: 0;
      border-right: 3px solid #d9dfdf;
    }

    .bar {
      display: flex;
      align-items: center;
      height: 36px;
      padding-left: 12px;
    }

    .bar button {
      width: 28px;
      height: 28px;
    }

    .bar .caret {
      width: 12px;
    }

    .bar .model,
    .bar .more {
      width: 24px;
    }

    .bar .drop {
      background: linear-gradient(315deg, #3b3d3f 50%, transparent 50%) right 3px bottom 2px / 4px 4px no-repeat;
    }

    .arrow {
      flex: none;
      width: 8px;
      height: 5px;
      background: #5b5e60;
      clip-path: polygon(0 0, 100% 0, 50% 100%);
    }

    .arrow.pale {
      background: #a3a7a8;
    }

    .arrow.up {
      clip-path: polygon(0 100%, 100% 100%, 50% 0);
    }

    .caret .arrow {
      width: 10px;
      height: 7px;
    }

    .grip {
      width: 6px;
      height: 16px;
      margin-right: 8px;
      background: repeating-linear-gradient(#aaa 0 2px, transparent 2px 4px) center / 2px 100% no-repeat;
    }

    .rule {
      width: 1px;
      height: 28px;
      margin: 0 4px;
      background: #b4babc;
    }

    .search {
      display: flex;
      align-items: center;
      padding: 0 8px 0 14px;
    }

    .box {
      display: flex;
      flex: 1;
      min-width: 0;
      height: 31px;
      margin-left: 6px;
      border: 1px solid #a3b0b3;
      background: #fff;
    }

    .box input {
      flex: 1;
      min-width: 0;
      padding: 0 6px;
      border: 0;
      outline: 0;
      background: none;
      font: inherit;
    }

    .search button {
      width: 24px;
    }

    .head {
      height: 26px;
      margin: 9px 5px 0 8px;
      border-right: 1px solid #cfd2d3;
      border-bottom: 1px solid #cfd2d3;
      background: #fafbfb;
    }

    .body {
      display: flex;
      flex: 1;
      min-height: 0;
      padding: 0 5px 4px 0;
    }

    .list {
      flex: 1;
    }

    ul {
      margin: 0;
      padding: 5px 0 0;
      list-style: none;
      background: linear-gradient(#bcc2c4, #bcc2c4) 19px 0 / 1px 5px no-repeat;
    }

    li {
      display: flex;
      align-items: center;
      height: 26px;
      padding-left: 19px;
      color: #4b4e50;
    }

    li::before {
      content: '';
      width: 9px;
      height: 26px;
      margin-right: 3px;
      background:
        linear-gradient(#bcc2c4, #bcc2c4) 0 0 / 1px 100% no-repeat,
        linear-gradient(#bcc2c4, #bcc2c4) 0 13px / 100% 1px no-repeat;
    }

    li:last-child::before {
      background-size: 1px 13px, 100% 1px;
    }

    li .icon {
      margin-right: 5px;
    }

    li span {
      padding-top: 2px;
    }

    .off {
      color: #c4b9a2;
    }

    .ends {
      display: flex;
      align-items: center;
      height: 20px;
      padding-left: 11px;
    }

    .ends::before,
    .ends::after {
      content: '';
      width: 2px;
      height: 8px;
      background: #5ec13f;
    }

    .ends span {
      flex: 1;
      height: 2px;
      background: #5ec13f;
      box-shadow: 0 -1px #b4e6a5;
    }

    .scroll {
      display: flex;
      flex-direction: column;
      box-sizing: border-box;
      width: 19px;
      border: solid #cfd2d3;
      border-width: 0 1px 1px;
    }

    .scroll button {
      flex: none;
      height: 18px;
      background: #fafafa;
    }

    .track {
      display: flex;
      flex: 1;
      flex-direction: column;
      padding-top: 132px;
      background: #e0e1e2;
    }

    .thumb {
      flex: 1;
      border: solid #bfc3c5;
      border-width: 1px 0;
      background: #f8f9f9;
    }
  `;

  override render() {
    return html`
      <div class="tabs">
        <button class="active" aria-label="模型树">${icon('treeTab')}</button>
        <button aria-label="文件夹浏览器">${icon('folders')}</button>
      </div>
      <div class="content">
        <div class="bar">
          <button class="caret" aria-label="展开"><i class="arrow pale"></i></button>
          <button class="model" aria-label="模型">${icon('model')}</button>
          <i class="grip"></i>
          <button aria-label="层级">${icon('levels')}</button>
          <button aria-label="全部展开">${icon('expand')}</button>
          <button aria-label="树列">${icon('columns')}</button>
          <i class="rule"></i>
          <button aria-label="新建主体">${icon('bodyNew')}</button>
          <i class="rule"></i>
          <button aria-label="树过滤器">${icon('treeFilter')}</button>
          <button class="more" aria-label="更多">${icon('more')}</button>
          <button class="drop" aria-label="设置">${icon('sheet')}</button>
        </div>
        <div class="search">
          ${icon('funnel')}
          <div class="box">
            <input type="text" aria-label="搜索模型树" />
            <button aria-label="清除">${icon('clear')}</button>
          </div>
          <button aria-label="搜索选项"><i class="arrow"></i></button>
          <button aria-label="添加">${icon('plus')}</button>
        </div>
        <div class="head"></div>
        <div class="body">
          <div class="list">
            <ul>
              ${features.map(
                ([kind, name]) => html`
                  <li class=${classMap({off: kind.endsWith('Off')})}>${icon(kind)}<span>${name}</span></li>
                `
              )}
            </ul>
            <div class="ends"><span></span></div>
          </div>
          <div class="scroll">
            <button aria-label="向上滚动"><i class="arrow up pale"></i></button>
            <div class="track"><div class="thumb"></div></div>
            <button aria-label="向下滚动"><i class="arrow pale"></i></button>
          </div>
        </div>
      </div>
    `;
  }
}

@customElement('graphics-view')
class GraphicsView extends LitElement {
  static override styles = css`
    :host {
      display: block;
      position: relative;
      flex: 1;
      min-width: 0;
      overflow: hidden;
      background: #e8eaee;
    }

    .scene {
      display: block;
      width: 100%;
      height: 100%;
    }

    .tools {
      position: absolute;
      top: 7px;
      left: 472px;
      display: flex;
      gap: 3px;
      padding: 4px 4px 3px;
      border: 1px solid #999c9f;
      background: #f8f9fc;
    }

    .tools button {
      box-sizing: border-box;
      display: flex;
      align-items: center;
      justify-content: center;
      width: 27px;
      height: 27px;
      padding: 0 1px 1px 0;
      border: 0;
      background: none;
    }

    .tools .on {
      border: 1px solid #a9acae;
      background-color: #dfe1e3;
    }

    .tools .hot {
      background-image: linear-gradient(45deg, transparent 50%, #0d8cf0 50%);
      background-position: top right;
      background-size: 5px 5px;
      background-repeat: no-repeat;
    }

    .tools .drop {
      background-image: linear-gradient(315deg, #55585a 50%, transparent 50%);
      background-position: right 1px bottom 2px;
      background-size: 4px 4px;
      background-repeat: no-repeat;
    }

    .mark {
      position: absolute;
      right: 19px;
      bottom: 6px;
      text-decoration: none;
    }

    .title {
      display: flex;
      gap: 6px;
      color: #000;
      font-size: 40px;
      font-weight: 300;
      line-height: 44px;
    }

    .title em {
      color: #fd6a35;
    }

    .url {
      display: block;
      color: #9a9ca0;
      font: italic 16px/18px 'DejaVu Sans', Verdana, sans-serif;
    }

    .flame {
      position: absolute;
      top: -17px;
      left: 60px;
    }
  `;

  override render() {
    return html`
      <svg class="scene" viewBox="280 109 1000 787" role="img" aria-label="模型">
        <defs>
          <clipPath id="body"><path d=${body} /></clipPath>
          <filter id="soften"><feGaussianBlur stdDeviation="2" /></filter>
          <radialGradient id="tip" gradientUnits="userSpaceOnUse" cx="1061" cy="660" r="26">
            <stop offset="0" stop-color="#9ea9ec" />
            <stop offset=".5" stop-color="#7f88c4" />
            <stop offset="1" stop-color="#4d5279" />
          </radialGradient>
        </defs>
        <path d=${body} fill="#7d86c4" />
        <g clip-path="url(#body)">
          <g filter="url(#soften)">${facets()}</g>
          <path d="M1051 681${tip}${tipSeam.replace('M1074 644', '')}Z" fill="url(#tip)" />
        </g>
        <g fill="none">
          <path d=${innerFold} stroke="#1c1d2b" stroke-width="1.200" />
          <path d="M1074 644${back}" stroke="#4d5272" stroke-width=".8" />
          <path d="M960 685${belly}" stroke="#22263a" stroke-width="1.200" />
          <path d=${outerTop} stroke="#6a73a0" stroke-width=".8" />
          <g stroke="#1fb3e8">
            <path d=${upperGuide} />
            <path d=${lowerGuide} />
            <path d=${rightEdge} />
            <path d="M582 448${outerBottom}" />
            <path d=${midSeam} />
            <path d=${tailSeam} />
            <path d=${tipSeam} />
            <path d="M1051 681${tip}" />
            <ellipse cx="1215" cy="357.5" rx="86" ry="7" transform="rotate(68.8 1215 357.5)" />
          </g>
          <path d="M753 190L979 731M608 593L1280 332" stroke="#7d5560" stroke-dasharray="7 3 2 3" />
        </g>
        ${vertices.map(
          ([x, y]) => svg`
            <g transform="translate(${x} ${y})">
              <path d="M-5 -5L5 5M5 -5L-5 5" stroke="#b5114f" stroke-width="2.400"/>
              <circle r="3.200" fill="#e9a233"/>
              <circle r="1.200" fill="#b5114f"/>
            </g>`
        )}
      </svg>
      <div class="tools" role="toolbar">
        ${viewTools.map(([name, label, state]) => html`<button class=${state ?? ''} aria-label=${label}>${icon(name)}</button>`)}
      </div>
      <a class="mark" href="http://www.proewildfire.cn">
        <span class="title"><em>野火</em>论坛</span>
        <span class="url">www.proewildfire.cn</span>
        <svg class="flame" width="24" height="44" viewBox="0 0 24 44" aria-hidden="true">
          <path d="M8 0C18 9 23 17 19 28C17 34 13 38 9 42L3 38C9 34 11 29 8 22C12 26 13 25 12 20C12 17 10 14 8 12C14 14 15 17 16 19C16 10 12 5 8 0z" fill="#fd6a35" />
        </svg>
      </a>
    `;
  }
}

@customElement('app-root')
class AppRoot extends LitElement {
  static override styles = css`
    :host {
      display: flex;
      flex-direction: column;
      height: 100vh;
      overflow: hidden;
      background: #f7f9fc;
      font: 12px/18px 'Open Sans', 'Noto Sans CJK SC', sans-serif;
    }

    header {
      display: flex;
      flex: none;
      align-items: flex-end;
      height: 108px;
      overflow: hidden;
      border-bottom: 1px solid #b3b7ba;
    }

    main {
      display: flex;
      flex: 1;
      min-height: 0;
    }
  `;

  override render() {
    return html`
      <header>${groups.map((g) => html`<ribbon-group .group=${g}></ribbon-group>`)}</header>
      <main>
        <model-tree></model-tree>
        <graphics-view></graphics-view>
      </main>
    `;
  }
}

declare global {
  interface HTMLElementTagNameMap {
    'ribbon-group': RibbonGroup;
    'model-tree': ModelTree;
    'graphics-view': GraphicsView;
    'app-root': AppRoot;
  }
}
